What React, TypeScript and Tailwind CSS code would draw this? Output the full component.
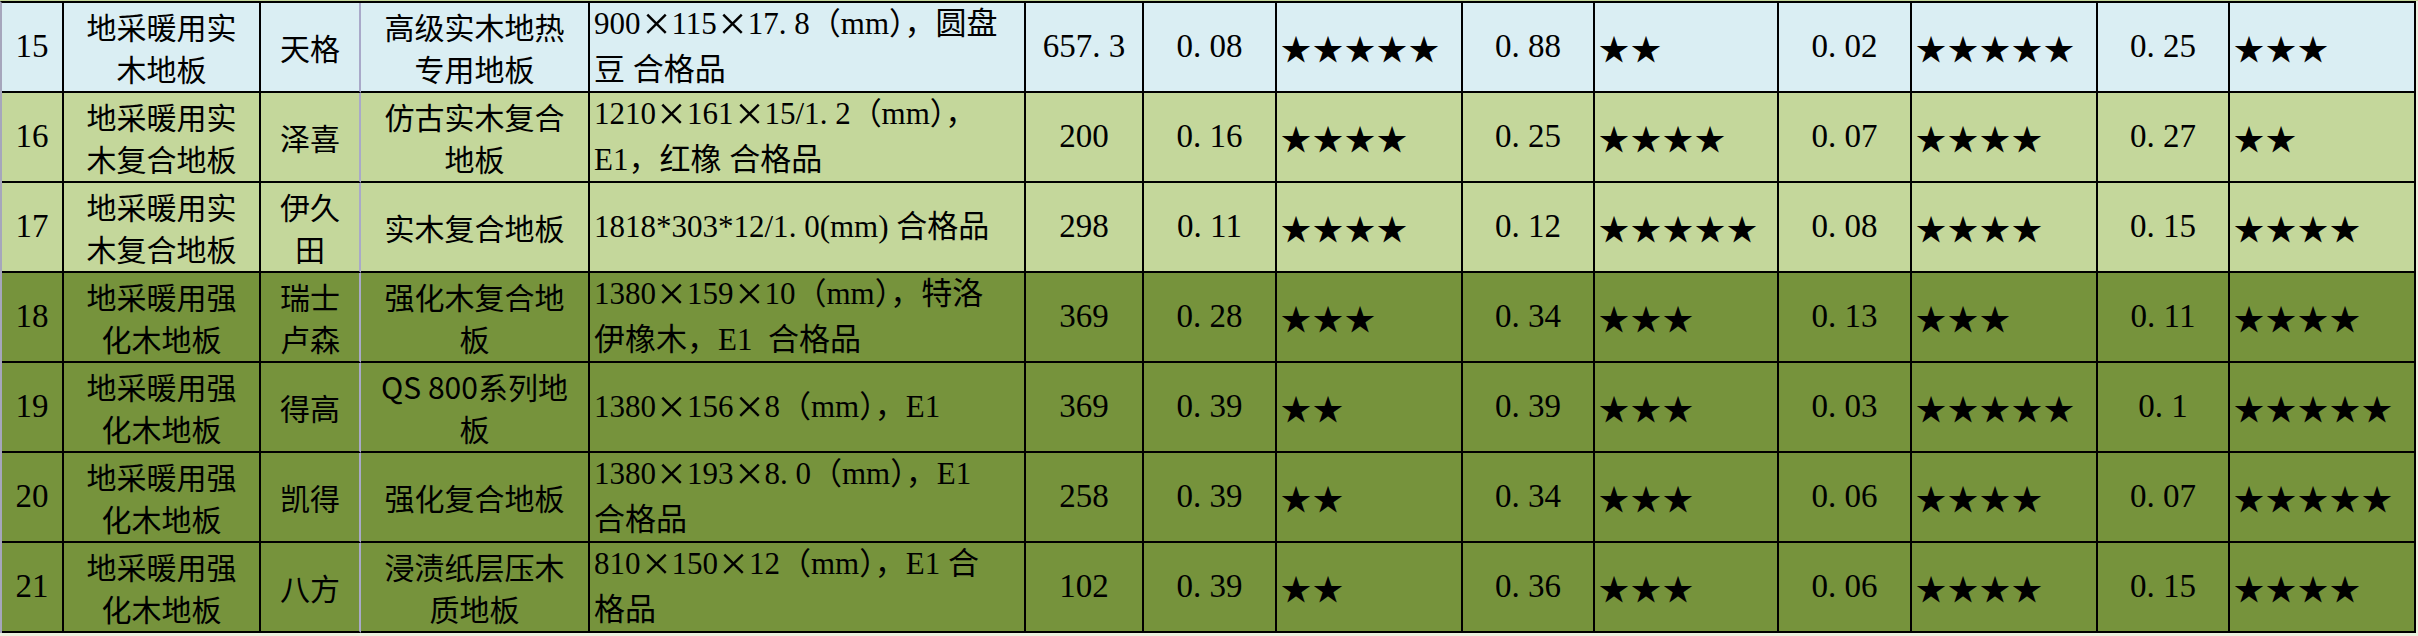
import React from "react";

type Row = {
  no: string;
  cat: string[];
  brand: string[];
  product: string[];
  spec: string[];
  price: string;
  r: [string, number][];
  bg: string;
};

const BLUE = "bg-[#daeef3]";
const LIGHT = "bg-[#c4d79b]";
const OLIVE = "bg-[#76933c]";

const rows: Row[] = [
  {
    no: "15",
    cat: ["地采暖用实", "木地板"],
    brand: ["天格"],
    product: ["高级实木地热", "专用地板"],
    spec: ["900×115×17.8（mm），圆盘", "豆 合格品"],
    price: "657.3",
    r: [["0.08", 5], ["0.88", 2], ["0.02", 5], ["0.25", 3]],
    bg: BLUE,
  },
  {
    no: "16",
    cat: ["地采暖用实", "木复合地板"],
    brand: ["泽喜"],
    product: ["仿古实木复合", "地板"],
    spec: ["1210×161×15/1.2（mm），", "E1，红橡 合格品"],
    price: "200",
    r: [["0.16", 4], ["0.25", 4], ["0.07", 4], ["0.27", 2]],
    bg: LIGHT,
  },
  {
    no: "17",
    cat: ["地采暖用实", "木复合地板"],
    brand: ["伊久", "田"],
    product: ["实木复合地板"],
    spec: ["1818*303*12/1.0(mm) 合格品"],
    price: "298",
    r: [["0.11", 4], ["0.12", 5], ["0.08", 4], ["0.15", 4]],
    bg: LIGHT,
  },
  {
    no: "18",
    cat: ["地采暖用强", "化木地板"],
    brand: ["瑞士", "卢森"],
    product: ["强化木复合地", "板"],
    spec: ["1380×159×10（mm），特洛", "伊橡木，E1  合格品"],
    price: "369",
    r: [["0.28", 3], ["0.34", 3], ["0.13", 3], ["0.11", 4]],
    bg: OLIVE,
  },
  {
    no: "19",
    cat: ["地采暖用强", "化木地板"],
    brand: ["得高"],
    product: ["QS 800系列地", "板"],
    spec: ["1380×156×8（mm），E1"],
    price: "369",
    r: [["0.39", 2], ["0.39", 3], ["0.03", 5], ["0.1", 5]],
    bg: OLIVE,
  },
  {
    no: "20",
    cat: ["地采暖用强", "化木地板"],
    brand: ["凯得"],
    product: ["强化复合地板"],
    spec: ["1380×193×8.0（mm），E1", "合格品"],
    price: "258",
    r: [["0.39", 2], ["0.34", 3], ["0.06", 4], ["0.07", 5]],
    bg: OLIVE,
  },
  {
    no: "21",
    cat: ["地采暖用强", "化木地板"],
    brand: ["八方"],
    product: ["浸渍纸层压木", "质地板"],
    spec: ["810×150×12（mm），E1 合", "格品"],
    price: "102",
    r: [["0.39", 2], ["0.36", 3], ["0.06", 4], ["0.15", 4]],
    bg: OLIVE,
  },
];

const base = "h-[90px] shrink-0 border-r-2 border-b-2 border-black flex items-center";
const cjk = "font-['Noto_Sans_CJK_SC',sans-serif] text-[30px] leading-[42px] text-black";
const num = "font-['Liberation_Serif','Noto_Sans_CJK_SC',serif] text-[33px] text-black";
const mixed = "font-['Liberation_Serif','Noto_Sans_CJK_SC',serif] text-[31px] leading-[46px] text-black";
const star = "font-['Noto_Sans_CJK_SC',sans-serif] text-[30px] tracking-[2px] text-black";

const valW = ["w-[133px]", "w-[132px]", "w-[133px]", "w-[132px]"];
const starW = ["w-[186px]", "w-[184px]", "w-[186px]", "w-[186px]"];

function fmt(s: string): React.ReactNode[] {
  const out: React.ReactNode[] = [];
  let buf = "";
  const flush = () => {
    if (buf) out.push(buf);
    buf = "";
  };
  Array.from(s).forEach((ch, i) => {
    if (ch === "×") {
      flush();
      out.push(
        <span key={i} className="inline-block w-[1em] text-center scale-[1.6]">
          ×
        </span>
      );
    } else if (ch === ".") {
      flush();
      out.push(
        <span key={i} className="inline-block w-[0.5em]">
          .
        </span>
      );
    } else {
      buf += ch;
    }
  });
  flush();
  return out;
}

function Lines({ lines }: { lines: string[] }) {
  return (
    <div className="flex flex-col items-center whitespace-pre">
      {lines.map((l, i) => (
        <div key={i}>{l}</div>
      ))}
    </div>
  );
}

export default function App() {
  return (
    <div className="w-[2418px] h-[636px] bg-[#ebf1de] overflow-hidden">
      <div className="h-[1px] bg-[#c4d79b]" />
      <div className="flex flex-col w-[2416px] border-t-2 border-black border-l-2 border-l-[#a6a6bc]">
        {rows.map((row) => (
          <div key={row.no} className={`flex ${row.bg}`}>
            <div className={`${base} w-[62px] justify-center ${num}`}>{row.no}</div>
            <div className={`${base} w-[197px] justify-center ${cjk}`}>
              <Lines lines={row.cat} />
            </div>
            <div className={`${base} w-[100px] justify-center border-r-[#a9a9c9] ${cjk}`}>
              <Lines lines={row.brand} />
            </div>
            <div className={`${base} w-[229px] justify-center ${cjk}`}>
              <Lines lines={row.product} />
            </div>
            <div className={`${base} w-[436px] justify-start pl-[4px] ${mixed}`}>
              <div className="flex flex-col whitespace-pre">
                {row.spec.map((l, i) => (
                  <div key={i}>{fmt(l)}</div>
                ))}
              </div>
            </div>
            <div className={`${base} w-[118px] justify-center ${num}`}>{fmt(row.price)}</div>
            {row.r.map(([v, n], i) => (
              <React.Fragment key={i}>
                <div className={`${base} ${valW[i]} justify-center ${num}`}>{fmt(v)}</div>
                <div className={`${base} ${starW[i]} justify-start pl-[4px] ${star}`}>
                  {"★".repeat(n)}
                </div>
              </React.Fragment>
            ))}
          </div>
        ))}
      </div>
    </div>
  );
}
